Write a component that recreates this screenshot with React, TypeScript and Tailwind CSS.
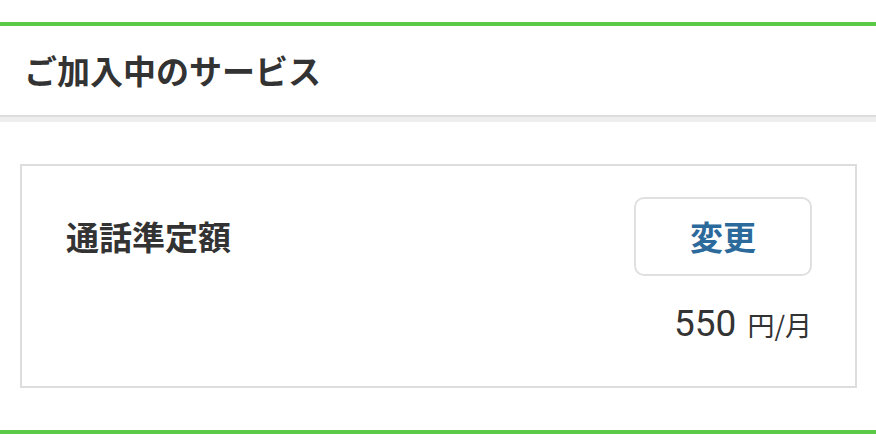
export default function App() {
  const jp = { fontFamily: '"Noto Sans CJK JP", "Noto Sans", sans-serif' };
  return (
    <div className="w-[876px] h-[444px] bg-white text-[#333] overflow-hidden" style={jp}>
      <div className="h-[22px]" />
      <div className="h-[4px] bg-[#5cc947]" />
      <div className="h-[89px] flex items-center px-[24px]">
        <h2 className="text-[33px] font-bold leading-none">ご加入中のサービス</h2>
      </div>
      <div className="h-[7px] bg-[#eeeeee] border-t-2 border-[#dddddd]" />

      <div className="pt-[42px] pl-[20px] pr-[19px]">
        <div className="h-[224px] border-2 border-[#dddddd] pl-[44px] pr-[43px] pt-[31px]">
          <div className="flex items-center justify-between">
            <div className="text-[33px] font-bold leading-none">通話準定額</div>
            <button className="w-[178px] h-[79px] rounded-[10px] border-2 border-[#e0e0e0] bg-white text-[33px] font-bold text-[#2d6a9c] leading-none">
              変更
            </button>
          </div>
          <div className="mt-[29px] flex justify-end items-baseline">
            <span className="text-[37px] leading-none" style={{ fontFamily: 'Roboto, "Noto Sans CJK JP", sans-serif' }}>550</span>
            <span className="ml-[11px] text-[27px] leading-none">円/月</span>
          </div>
        </div>
      </div>

      <div className="h-[42px]" />
      <div className="h-[4px] bg-[#5cc947]" />
    </div>
  );
}
